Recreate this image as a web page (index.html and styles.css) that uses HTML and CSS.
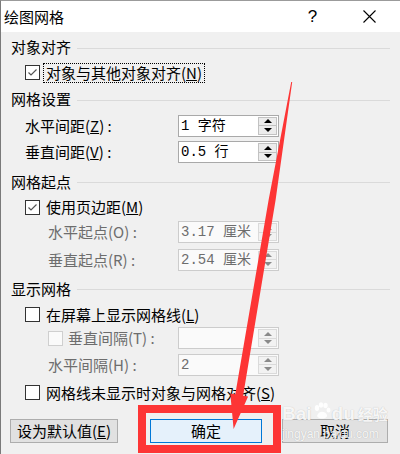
FILE: index.html
```html
<!DOCTYPE html>
<html lang="zh-CN">
<head>
<meta charset="utf-8">
<title>绘图网格</title>
<link rel="stylesheet" href="styles.css">
</head>
<body>
<div class="dialog">
  <div class="titlebar">
    <span class="title">绘图网格</span>
    <span class="help">?</span>
    <span class="close"><svg width="13" height="13" viewBox="0 0 13 13"><path d="M0.5 0.5 L12.5 12.5 M12.5 0.5 L0.5 12.5" stroke="#000" stroke-width="1.1" fill="none"/></svg></span>
  </div>
  <div class="content">
    <div class="row hdr"><span>对象对齐</span><i class="rule"></i></div>
    <div class="row check t15">
      <span class="cb"><svg width="13" height="13" viewBox="0 0 13 13"><path d="M2.5 6.5 L5 9 L10.5 3.5" stroke="#555" stroke-width="1.2" fill="none"/></svg></span>
      <span class="lbl focus">对象与其他对象对齐(<u>N</u>)</span>
    </div>

    <div class="row hdr"><span>网格设置</span><i class="rule"></i></div>
    <div class="row pair">
      <span class="key">水平间距(<u>Z</u>) :</span>
      <span class="field"><span class="val">1 字符</span><span class="spin"><b class="up"></b><b class="down"></b></span></span>
    </div>
    <div class="row pair">
      <span class="key">垂直间距(<u>V</u>) :</span>
      <span class="field"><span class="val">0.5 行</span><span class="spin"><b class="up"></b><b class="down"></b></span></span>
    </div>

    <div class="row hdr t55"><span>网格起点</span><i class="rule"></i></div>
    <div class="row check t15">
      <span class="cb"><svg width="13" height="13" viewBox="0 0 13 13"><path d="M2.5 6.5 L5 9 L10.5 3.5" stroke="#555" stroke-width="1.2" fill="none"/></svg></span>
      <span class="lbl">使用页边距(<u>M</u>)</span>
    </div>
    <div class="row pair dis t1">
      <span class="key">水平起点(O) :</span>
      <span class="field"><span class="val">3.17 厘米</span><span class="spin"><b class="up"></b><b class="down"></b></span></span>
    </div>
    <div class="row pair dis t35">
      <span class="key">垂直起点(R) :</span>
      <span class="field"><span class="val">2.54 厘米</span><span class="spin"><b class="up"></b><b class="down"></b></span></span>
    </div>

    <div class="row hdr t5"><span>显示网格</span><i class="rule"></i></div>
    <div class="row check t2">
      <span class="cb"></span>
      <span class="lbl">在屏幕上显示网格线(<u>L</u>)</span>
    </div>
    <div class="row pair dis tn">
      <span class="key"><span class="cb off"></span><span class="sub">垂直间隔(T) :</span></span>
      <span class="field"><span class="val"></span><span class="spin"><b class="up"></b><b class="down"></b></span></span>
    </div>
    <div class="row pair dis">
      <span class="key">水平间隔(H) :</span>
      <span class="field"><span class="val">2</span><span class="spin"><b class="up"></b><b class="down"></b></span></span>
    </div>
    <div class="row check t4">
      <span class="cb"></span>
      <span class="lbl">网格线未显示时对象与网格对齐(<u>S</u>)</span>
    </div>

    <div class="buttons">
      <button class="btn btn-default">设为默认值(<u>E</u>)</button>
      <button class="btn btn-ok">确定</button>
      <button class="btn btn-cancel">取消</button>
    </div>
  </div>

  <div class="watermark">
    <div class="wm-logo">Bai<svg class="paw" width="18" height="18" viewBox="0 0 18 18"><ellipse cx="4" cy="6" rx="2.2" ry="3" /><ellipse cx="8" cy="3" rx="2.2" ry="2.8"/><ellipse cx="12.5" cy="3.5" rx="2.2" ry="2.8"/><ellipse cx="15.5" cy="8" rx="2" ry="2.6"/><path d="M4 14 C5 9 12 8 14 13 C15 17 6 18 4 14 Z"/></svg>du<span class="wm-cn">经验</span></div>
    <div class="wm-url">jingyan.baidu.com</div>
  </div>

  <svg class="arrow" width="400" height="454" viewBox="0 0 400 454">
    <polygon points="291.2,82 268.6,200 235.3,394.3 230.3,393.5 233.6,429 248.1,396.5 243.1,395.7 275.6,200 292.2,82" fill="#fd3535"/>
  </svg>
  <div class="highlight"></div>
</div>
</body>
</html>
```

FILE: styles.css
```css
* { box-sizing: border-box; }

html, body {
  margin: 0;
  padding: 0;
  background: #f0f0f0;
}

.dialog {
  position: relative;
  width: 400px;
  height: 454px;
  overflow: hidden;
  background: #f0f0f0;
  border-top: 1px solid #9b9b9b;
  border-left: 1px solid #7a7a7a;
  font-family: "Noto Sans CJK SC", sans-serif;
  font-size: 15px;
  color: #000;
}

/* title bar */
.titlebar {
  height: 31px;
  background: #fff;
  display: flex;
  align-items: center;
}
.title {
  flex: 1;
  padding-left: 3px;
  line-height: 20px;
}
.help {
  width: 45px;
  text-align: center;
  font-family: "Liberation Sans", sans-serif;
  font-size: 17px;
  line-height: 20px;
}
.close {
  width: 46px;
  margin-left: 11px;
  margin-right: 8px;
  display: flex;
  justify-content: center;
}

/* content */
.content {
  padding: 3px 10px 0 10px;
  display: flex;
  flex-direction: column;
}

.row {
  height: 24px;
  display: flex;
  align-items: center;
  margin-top: 2.5px;
  line-height: 20px;
  white-space: nowrap;
}
.row:first-child { margin-top: 0; }
.t1 { margin-top: 1px; }
.t15 { margin-top: 1.5px; }
.t2 { margin-top: 2px; }
.t35 { margin-top: 3.5px; }
.t4 { margin-top: 4px; }
.t5 { margin-top: 5px; }
.t55 { margin-top: 5.5px; }
.tn { margin-top: -0.5px; }

.hdr .rule {
  flex: 1;
  height: 1px;
  background: #dadada;
  margin-left: 6px;
  margin-top: 2px;
}

/* checkboxes */
.check { padding-left: 14px; }
.cb {
  width: 15px;
  height: 15px;
  flex: none;
  border: 1px solid #333;
  background: #fff;
  display: flex;
  align-items: center;
  justify-content: center;
}
.cb.off {
  border-color: #cfcfcf;
  background: #fafafa;
}
.lbl { margin-left: 6px; }
.lbl.focus {
  margin-left: 3px;
  padding: 0 2px;
  border: 1px dotted #000;
  line-height: 18px;
}

/* label + spin field rows */
.pair .key {
  width: 167px;
  flex: none;
  padding-left: 14px;
  display: flex;
  align-items: center;
}
.pair.dis .key { padding-left: 37px; }
.dis { color: #6d6d6d; }
.sub { margin-left: 5px; }

.field {
  width: 101px;
  height: 22px;
  flex: none;
  display: flex;
  align-items: center;
  border: 1px solid #a9a9a9;
  background: #fff;
  padding-left: 2px;
}
.dis .field {
  border-color: #cccccc;
  background: #fafafa;
}
.val {
  flex: 1;
  font-family: "Liberation Mono", "Noto Sans CJK SC", monospace;
  font-size: 14px;
  line-height: 18px;
  color: #000;
}
.dis .val { color: #6d6d6d; }

.spin {
  width: 19px;
  height: 18px;
  margin-right: 1px;
  display: flex;
  flex-direction: column;
}
.spin b {
  flex: 1;
  display: flex;
  align-items: center;
  justify-content: center;
  border: 1px solid #c2c2c2;
  background: #ececec;
}
.spin b + b { margin-top: 0; border-top: none; }
.dis .spin b {
  border-color: #dadada;
  background: #f2f2f2;
}
.spin .up::before,
.spin .down::before {
  content: "";
  width: 0;
  height: 0;
  border-left: 4px solid transparent;
  border-right: 4px solid transparent;
}
.spin .up::before { border-bottom: 4px solid #000; }
.spin .down::before { border-top: 4px solid #000; }
.dis .spin .up::before { border-bottom-color: #8a8a8a; }
.dis .spin .down::before { border-top-color: #8a8a8a; }

/* buttons */
.buttons {
  display: flex;
  margin-top: 14.5px;
}
.btn {
  height: 24px;
  padding: 0;
  border: 1px solid #adadad;
  background: #e1e1e1;
  font-family: "Noto Sans CJK SC", sans-serif;
  font-size: 15px;
  line-height: 20px;
  color: #000;
}
.btn-default { width: 108px; margin-left: -1px; }
.btn-ok {
  width: 112px;
  margin-left: 32px;
  border-color: #0078d7;
  background: #e5f1fb;
}
.btn-cancel { width: 106px; margin-left: 20px; }

/* annotation overlay */
.arrow {
  position: absolute;
  left: -1px;
  top: -1px;
  pointer-events: none;
}
.highlight {
  position: absolute;
  left: 137px;
  top: 404px;
  width: 143px;
  height: 48px;
  border: 8px solid #fd3535;
  pointer-events: none;
}

.watermark {
  position: absolute;
  left: 281px;
  top: 400px;
  color: rgba(255, 255, 255, 0.9);
  text-shadow: 0 0 1px rgba(0, 0, 0, 0.25);
  pointer-events: none;
}
.wm-logo {
  display: flex;
  align-items: center;
  font-family: "Liberation Sans", sans-serif;
  font-weight: bold;
  font-size: 19px;
  line-height: 26px;
}
.paw {
  fill: rgba(255, 255, 255, 0.9);
  margin: -6px 1px 0 1px;
}
.wm-cn {
  font-family: "Noto Sans CJK SC", sans-serif;
  font-weight: bold;
  font-size: 15px;
  margin-left: 3px;
}
.wm-url {
  font-family: "Liberation Sans", sans-serif;
  font-size: 12px;
  line-height: 12px;
  margin-top: 1px;
}
```
